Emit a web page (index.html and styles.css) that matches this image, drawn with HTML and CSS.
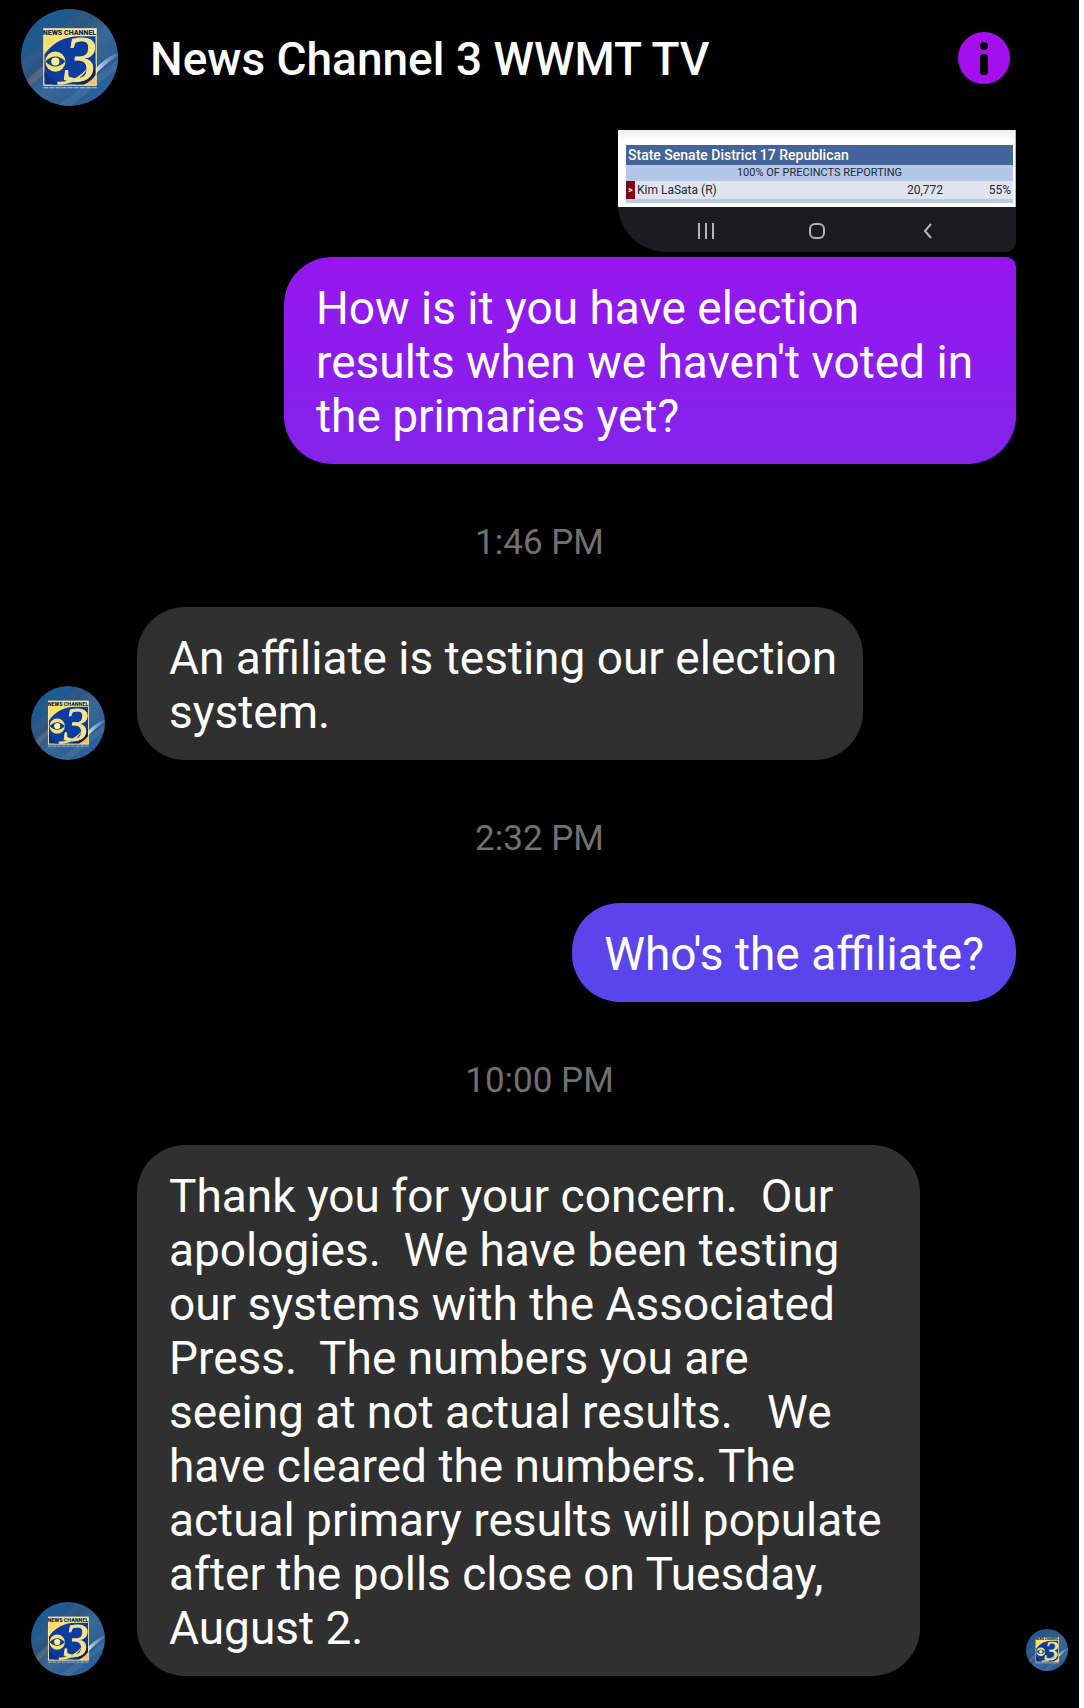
FILE: index.html
```html
<!DOCTYPE html>
<html lang="en">
<head>
    <meta charset="UTF-8">
    <meta name="viewport" content="width=device-width, initial-scale=1.0">
    <title>News Channel 3 WWMT TV</title>
    <link rel="stylesheet" href="styles.css">
</head>
<body>
    <!-- Station logo, reused for every avatar -->
    <svg class="sprite" width="0" height="0" aria-hidden="true">
        <defs>
            <linearGradient id="sky" x1="0" y1="0" x2="1" y2="1">
                <stop offset="0" stop-color="#1d5c94"/>
                <stop offset="0.25" stop-color="#1f5a90"/>
                <stop offset="0.38" stop-color="#2d547f"/>
                <stop offset="0.55" stop-color="#3a6899"/>
                <stop offset="0.75" stop-color="#2b5f94"/>
                <stop offset="1" stop-color="#2468a4"/>
            </linearGradient>
            <linearGradient id="gold" x1="0" y1="0" x2="1" y2="1">
                <stop offset="0" stop-color="#fbd44a"/>
                <stop offset="0.5" stop-color="#fdf0a8"/>
                <stop offset="1" stop-color="#f6b94e"/>
            </linearGradient>
            <linearGradient id="shine" x1="0" y1="0" x2="1" y2="0">
                <stop offset="0" stop-color="#ffffff" stop-opacity="0.9"/>
                <stop offset="1" stop-color="#a9c4de" stop-opacity="0.2"/>
            </linearGradient>
            <clipPath id="round"><circle cx="48" cy="48" r="48"/></clipPath>
            <clipPath id="square"><rect x="23" y="20" width="51" height="55"/></clipPath>
        </defs>
        <symbol id="logo" viewBox="0 0 96 96">
            <g clip-path="url(#round)">
                <rect width="96" height="96" fill="url(#sky)"/>
                <path d="M0 52 L62 0 L76 0 L0 66Z" fill="#41648a" opacity="0.3"/>
                <path d="M4 72 L24 54 L24 62 L8 78Z" fill="#7c7379" opacity="0.5"/>
                <path d="M72 61 Q82 49 96 43 L96 46 Q84 54 72 66Z" fill="url(#shine)"/>
                <path d="M36 96 L96 50 L96 58 L50 96Z" fill="#6288ad" opacity="0.3"/>
            </g>
            <rect x="22" y="19" width="53" height="57" fill="#fbe9a4"/>
            <g clip-path="url(#square)">
                <rect x="23" y="20" width="51" height="55" fill="url(#gold)"/>
                <path d="M23 45 Q36 27 58 27 L74 27 L74 56 Q68 68 56 75 L32 75 Q23 72 23 66Z" fill="#0b3da0"/>
                <path d="M23 62 Q30 70 38 75 L23 75Z" fill="#0b2f86"/>
                <path d="M74 54 Q70 68 54 75 L62 75 Q70 71 74 65Z" fill="#0a2565"/>
            </g>
            <text class="logo-digit" x="43" y="71">3</text>
            <path d="M36 72 Q54 73 66 58 Q58 75 36 75Z" fill="#fbdc7c"/>
            <circle cx="34" cy="52" r="10" fill="#f7e27a"/>
            <path d="M24 52 Q34 42 44 52 Q34 62 24 52Z" fill="#123c8c"/>
            <circle cx="34" cy="52" r="4" fill="#fff3a0"/>
            <text class="logo-name" x="48" y="26">NEWS CHANNEL</text>
            <path d="M22 78 H75" stroke="#b7c9dc" stroke-width="1" stroke-dasharray="5 1"/>
        </symbol>
    </svg>

    <div class="chat">
        <header class="header">
            <svg class="avatar avatar-large" role="img" aria-label="News Channel 3"><use href="#logo"/></svg>
            <h1>News Channel 3 WWMT TV</h1>
            <button class="info" type="button" aria-label="Conversation info">
                <svg viewBox="0 0 52 52">
                    <circle cx="26" cy="26" r="26" fill="#a30fee"/>
                    <circle cx="26" cy="14" r="4" fill="#000"/>
                    <rect x="22" y="22" width="8" height="21" rx="3" fill="#000"/>
                </svg>
            </button>
        </header>

        <main class="messages">
            <!-- Attached screenshot -->
            <div class="row sent">
                <div class="photo">
                    <div class="results">
                        <table>
                            <thead>
                                <tr class="race"><th colspan="4">State Senate District 17 Republican</th></tr>
                                <tr class="precincts"><td colspan="4">100% OF PRECINCTS REPORTING</td></tr>
                            </thead>
                            <tbody>
                                <tr class="candidate">
                                    <td class="mark">&gt;</td>
                                    <td>Kim LaSata (R)</td>
                                    <td class="votes">20,772</td>
                                    <td class="percent">55%</td>
                                </tr>
                            </tbody>
                        </table>
                    </div>
                    <div class="navbar">
                        <svg viewBox="0 0 18 18"><path d="M2 1V17M9 1V17M16 1V17" stroke-width="2"/></svg>
                        <svg viewBox="0 0 18 18"><rect x="2" y="2" width="14" height="14" rx="5" stroke-width="2"/></svg>
                        <svg viewBox="0 0 18 18"><path d="M12 2L6 9L12 16" stroke-width="2"/></svg>
                    </div>
                </div>
            </div>

            <div class="row sent">
                <p class="bubble bubble-question">How is it you have election results when we haven't voted in the primaries yet?</p>
            </div>

            <time class="time">1:46 PM</time>

            <div class="row">
                <svg class="avatar" role="img" aria-label="News Channel 3"><use href="#logo"/></svg>
                <p class="bubble bubble-reply">An affiliate is testing our election system.</p>
            </div>

            <time class="time">2:32 PM</time>

            <div class="row sent">
                <p class="bubble bubble-followup">Who's the affiliate?</p>
            </div>

            <time class="time">10:00 PM</time>

            <div class="row last">
                <svg class="avatar" role="img" aria-label="News Channel 3"><use href="#logo"/></svg>
                <p class="bubble">Thank you for your concern.  Our apologies.  We have been testing our systems with the Associated Press.  The numbers you are seeing at not actual results.   We have cleared the numbers. The actual primary results will populate after the polls close on Tuesday, August 2.</p>
                <svg class="avatar avatar-seen" role="img" aria-label="Seen"><use href="#logo"/></svg>
            </div>
        </main>
    </div>
</body>
</html>
```

FILE: styles.css
```css
* {
    box-sizing: border-box;
}

body {
    margin: 0;
    background-color: #fff;
    font-family: Roboto, 'Liberation Sans', sans-serif;
}

.sprite {
    position: absolute;
}

.chat {
    min-height: 100vh;
    margin-right: 5px;
    padding-bottom: 32px;
    background-color: #000;
    color: #fff;
}

/* Header */
.header {
    display: flex;
    align-items: center;
    padding: 9px 69px 24px 21px;
}

h1 {
    flex: 1;
    margin: 0 0 0 32px;
    padding-top: 2px;
    font-size: 46px;
    font-weight: 500;
    line-height: 54px;
}

.info {
    width: 52px;
    height: 52px;
    padding: 0;
    border: 0;
    background: none;
    cursor: pointer;
}

.info svg {
    display: block;
}

/* Avatars */
.avatar {
    flex: none;
    width: 74px;
    height: 74px;
}

.avatar-large {
    width: 97px;
    height: 97px;
}

.avatar-seen {
    width: 42px;
    height: 42px;
    margin: 0 0 5px auto;
}

.logo-name {
    font-size: 7px;
    font-weight: 900;
    fill: #14284e;
    text-anchor: middle;
}

.logo-digit {
    font-family: 'Liberation Serif', serif;
    font-size: 64px;
    font-style: italic;
    fill: #fbe48c;
    stroke: #fbe48c;
    stroke-width: 1px;
}

/* Messages */
.messages {
    display: flex;
    flex-direction: column;
}

.row {
    display: flex;
    align-items: flex-end;
    gap: 32px;
    padding: 0 63px 0 31px;
}

.row.sent {
    justify-content: flex-end;
}

.row.last {
    padding-right: 11px;
}

.bubble {
    max-width: 783px;
    margin: 0;
    padding: 24px 26px 21px 32px;
    border-radius: 48px;
    background-color: #303030;
    font-size: 46px;
    line-height: 54px;
    white-space: pre-wrap;
}

.bubble-question {
    max-width: 732px;
    border-top-right-radius: 10px;
    background: linear-gradient(#9716ee, #8224ea);
}

.bubble-reply {
    max-width: 726px;
    padding-right: 16px;
}

.bubble-followup {
    padding-right: 32px;
    background: linear-gradient(#5f42ea, #5845ec);
}

.time {
    padding: 58px 0 43px;
    color: #707070;
    font-size: 35px;
    line-height: 42px;
    text-align: center;
}

/* Attached screenshot */
.photo {
    width: 398px;
    margin-bottom: 5px;
    overflow: hidden;
    border-radius: 0 0 10px 48px;
    background-color: #1b1c20;
}

.results {
    padding: 15px 2px 4px 8px;
    border-right: 1px solid #b5b5b5;
    background: linear-gradient(#ececec, #fff 10px);
}

table {
    width: 100%;
    border-collapse: collapse;
    border-bottom: 4px solid #bccae6;
    color: #222836;
    font-size: 12px;
}

th, td {
    padding: 0 2px;
    line-height: 16px;
}

.race th {
    background-color: #43639a;
    color: #fff;
    font-size: 14px;
    font-weight: 500;
    line-height: 20px;
    text-align: left;
}

.precincts td {
    background-color: #b3c6e7;
    font-size: 11px;
    text-align: center;
}

.candidate td {
    background-color: #e0e4ee;
    line-height: 18px;
}

.candidate .mark {
    width: 9px;
    background-color: #7d0a10;
    color: #fff;
    font-size: 9px;
    font-weight: bold;
}

.votes, .percent {
    width: 68px;
    text-align: right;
}

.navbar {
    display: flex;
    justify-content: space-between;
    padding: 15px 79px 12px;
}

.navbar svg {
    width: 18px;
    height: 18px;
    fill: none;
    stroke: #b4b5b8;
}
```
